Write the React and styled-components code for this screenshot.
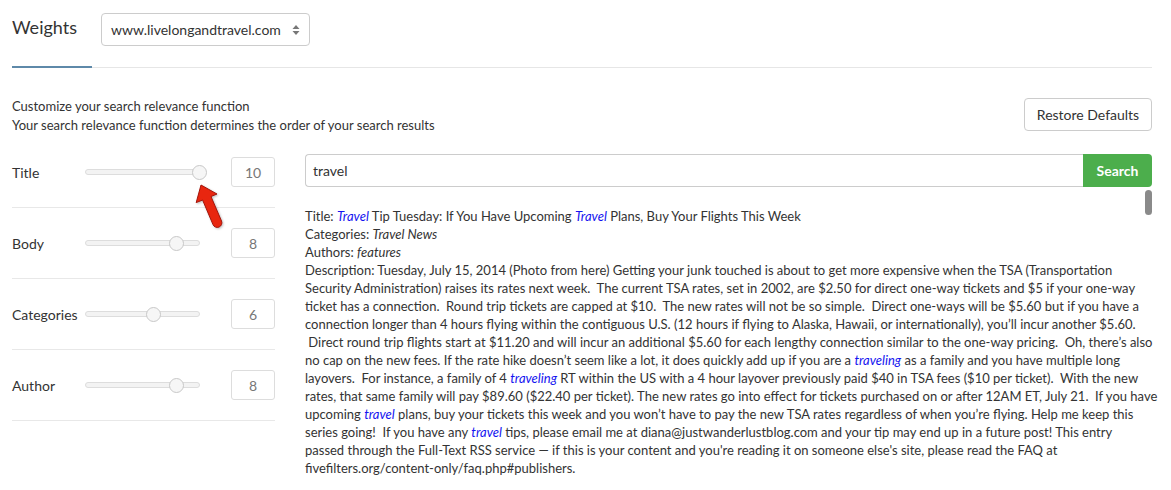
import React from "react";
import styled, { createGlobalStyle } from "styled-components";

const GlobalStyle = createGlobalStyle`
  body {
    margin: 0;
    background: #ffffff;
    font-family: Lato, "Open Sans", sans-serif;
    color: #333333;
  }
`;

const weights = [
  { label: "Title", value: 10 },
  { label: "Body", value: 8 },
  { label: "Categories", value: 6 },
  { label: "Author", value: 8 },
];

// {x} = search hit (blue italic), [x] = plain italic field value
const lines = [
  "Title: {Travel} Tip Tuesday: If You Have Upcoming {Travel} Plans, Buy Your Flights This Week",
  "Categories: [Travel News]",
  "Authors: [features]",
  "Description: Tuesday, July 15, 2014 (Photo from here) Getting your junk touched is about to get more expensive when the TSA (Transportation",
  "Security Administration) raises its rates next week.  The current TSA rates, set in 2002, are $2.50 for direct one-way tickets and $5 if your one-way",
  "ticket has a connection.  Round trip tickets are capped at $10.  The new rates will not be so simple.  Direct one-ways will be $5.60 but if you have a",
  "connection longer than 4 hours flying within the contiguous U.S. (12 hours if flying to Alaska, Hawaii, or internationally), you\u2019ll incur another $5.60.",
  " Direct round trip flights start at $11.20 and will incur an additional $5.60 for each lengthy connection similar to the one-way pricing.  Oh, there\u2019s also",
  "no cap on the new fees. If the rate hike doesn\u2019t seem like a lot, it does quickly add up if you are a {traveling} as a family and you have multiple long",
  "layovers.  For instance, a family of 4 {traveling} RT within the US with a 4 hour layover previously paid $40 in TSA fees ($10 per ticket).  With the new",
  "rates, that same family will pay $89.60 ($22.40 per ticket). The new rates go into effect for tickets purchased on or after 12AM ET, July 21.  If you have",
  "upcoming {travel} plans, buy your tickets this week and you won\u2019t have to pay the new TSA rates regardless of when you\u2019re flying. Help me keep this",
  "series going!  If you have any {travel} tips, please email me at diana@justwanderlustblog.com and your tip may end up in a future post! This entry",
  "passed through the Full-Text RSS service \u2014 if this is your content and you're reading it on someone else's site, please read the FAQ at",
  "fivefilters.org/content-only/faq.php#publishers.",
];

function renderLine(text) {
  return text.split(/(\{[^}]+\}|\[[^\]]+\])/).map((part, i) => {
    if (part.startsWith("{")) return <Hit key={i}>{part.slice(1, -1)}</Hit>;
    if (part.startsWith("[")) return <em key={i}>{part.slice(1, -1)}</em>;
    return part;
  });
}

export default function App() {
  return (
    <>
      <GlobalStyle />
      <Page>
        <Header>
          <SCTitle>Weights</SCTitle>
          <SiteSelect>
            www.livelongandtravel.com
            <svg width="8" height="12" viewBox="0 0 8 12">
              <path d="M4 1 L7.5 5 L0.5 5 Z" fill="#777" />
              <path d="M4 11 L7.5 7 L0.5 7 Z" fill="#777" />
            </svg>
          </SiteSelect>
        </Header>

        <TabBar>
          <ActiveTab />
          <TabRest />
        </TabBar>

        <Intro>
          <IntroText>
            <div>Customize your search relevance function</div>
            <div>Your search relevance function determines the order of your search results</div>
          </IntroText>
          <OutlineButton>Restore Defaults</OutlineButton>
        </Intro>

        <Main>
          <WeightList>
            {weights.map((w, i) => (
              <WeightRow key={w.label}>
                <WeightLabel>{w.label}</WeightLabel>
                <Track>
                  <Thumb style={{ left: `${w.value * 10}%` }} />
                </Track>
                <NumberBox>{w.value}</NumberBox>
                {i === 0 && (
                  <Pointer width="36" height="48" viewBox="0 0 36 48">
                    <path
                      d="M11 3 L27 12 L21 14.5 L31.5 39 A4.6 4.6 0 0 1 23 42.6 L12.6 18 L6.2 20.6 Z"
                      fill="#e8260f"
                      stroke="#a3140a"
                      strokeWidth="1"
                      strokeLinejoin="round"
                    />
                  </Pointer>
                )}
              </WeightRow>
            ))}
          </WeightList>

          <Preview>
            <SearchBar>
              <SearchInput>travel</SearchInput>
              <SearchButton>Search</SearchButton>
            </SearchBar>
            <Results>
              {lines.map((l, i) => (
                <ResultLine key={i}>{renderLine(l)}</ResultLine>
              ))}
              <ScrollThumb />
            </Results>
          </Preview>
        </Main>
      </Page>
    </>
  );
}

const Page = styled.div`
  width: 1140px;
  padding: 13px 19px 0 12px;
`;

const Header = styled.div`
  display: flex;
  align-items: center;
  height: 33px;
`;

const SCTitle = styled.h1`
  margin: 0 25px 0 0;
  width: 64px;
  font-size: 18px;
  font-weight: 400;
  color: #333333;
  position: relative;
  top: -3px;
`;

const SiteSelect = styled.div`
  box-sizing: border-box;
  width: 209px;
  height: 33px;
  padding: 0 9px;

  display: flex;
  align-items: center;
  justify-content: space-between;

  border: 1px solid #cccccc;
  border-radius: 4px;

  font-size: 14px;
  color: #333333;
`;

const TabBar = styled.div`
  margin-top: 20px;
  display: flex;
  align-items: flex-start;
`;

const ActiveTab = styled.div`
  width: 80px;
  height: 2px;
  background-color: #5e89a9;
`;

const TabRest = styled.div`
  flex: 1;
  height: 1px;
  margin-top: 1px;
  background-color: #e6e6e6;
`;

const Intro = styled.div`
  margin-top: 27px;
  display: flex;
  align-items: center;
  justify-content: space-between;
`;

const IntroText = styled.div`
  font-size: 13px;
  line-height: 19px;
  color: #333333;
  position: relative;
  top: 2px;
`;

const OutlineButton = styled.div`
  box-sizing: border-box;
  width: 128px;
  height: 33px;

  display: flex;
  align-items: center;
  justify-content: center;

  border: 1px solid #cccccc;
  border-radius: 4px;

  font-size: 14px;
  color: #333333;
`;

const Main = styled.div`
  margin-top: 4px;
  display: flex;
  gap: 30px;
`;

const WeightList = styled.div`
  width: 263px;
  flex-shrink: 0;
`;

const WeightRow = styled.div`
  position: relative;
  height: 70px;
  display: flex;
  align-items: center;
  border-bottom: 1px solid #e8e8e8;
`;

const WeightLabel = styled.div`
  width: 73px;
  font-size: 14px;
  color: #333333;
`;

const Track = styled.div`
  position: relative;
  box-sizing: border-box;
  width: 115px;
  height: 6px;
  border: 1px solid #dddddd;
  border-radius: 3px;
  background-color: #f3f3f3;
`;

const Thumb = styled.div`
  position: absolute;
  top: 50%;
  box-sizing: border-box;
  width: 15px;
  height: 15px;
  margin: -7.5px 0 0 -7.5px;

  border: 1px solid #c8c8c8;
  border-radius: 50%;
  background-color: #f6f6f6;
`;

const NumberBox = styled.div`
  box-sizing: border-box;
  width: 44px;
  height: 30px;
  margin-left: auto;

  display: flex;
  align-items: center;
  justify-content: center;

  border: 1px solid #dddddd;
  border-radius: 3px;

  font-size: 14px;
  color: #777777;
`;

const Pointer = styled.svg`
  position: absolute;
  left: 178px;
  top: 45px;
  filter: drop-shadow(1px 1px 1px rgba(0, 0, 0, 0.25));
`;

const Preview = styled.div`
  flex: 1;
  min-width: 0;
`;

const SearchBar = styled.div`
  margin-top: 17px;
  display: flex;
  height: 33px;
`;

const SearchInput = styled.div`
  box-sizing: border-box;
  flex: 1;
  padding: 0 7px;

  display: flex;
  align-items: center;

  border: 1px solid #cccccc;
  border-right: none;
  border-radius: 4px 0 0 4px;

  font-size: 14px;
  color: #333333;
`;

const SearchButton = styled.div`
  width: 69px;

  display: flex;
  align-items: center;
  justify-content: center;

  border-radius: 0 4px 4px 0;
  background-color: #4cae4c;

  font-size: 14px;
  font-weight: 700;
  color: #ffffff;
`;

const Results = styled.div`
  position: relative;
  margin-top: 20px;
  font-size: 13px;
  line-height: 18px;
  color: #333333;
`;

const ResultLine = styled.div`
  white-space: pre;
`;

const Hit = styled.em`
  color: #1414f0;
`;

const ScrollThumb = styled.div`
  position: absolute;
  right: 0;
  top: -17px;
  width: 7px;
  height: 25px;
  border-radius: 4px;
  background-color: #8a8a8a;
`;
